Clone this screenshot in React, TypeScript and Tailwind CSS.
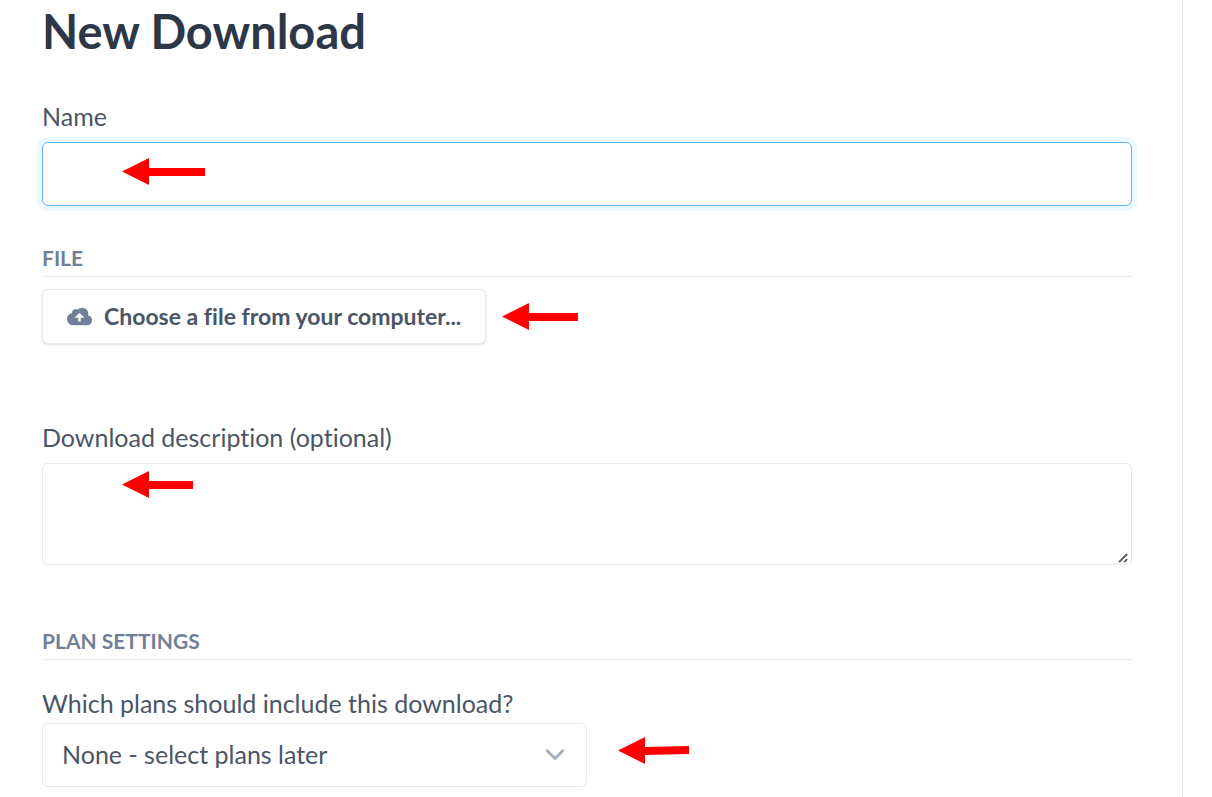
import React from "react";

function Arrow({ length, tail = 14, className = "" }: { length: number; tail?: number; className?: string }) {
  return (
    <svg
      aria-hidden="true"
      width={length}
      height={27}
      viewBox={`0 0 ${length} 27`}
      className={`pointer-events-none shrink-0 ${className}`}
      fill="#ff0000"
    >
      <polygon points={`0,13.5 27,0 27,10 ${length},${tail - 4} ${length},${tail + 4} 27,18 27,27`} />
    </svg>
  );
}

function CloudUpload() {
  return (
    <svg aria-hidden="true" width="25" height="25" viewBox="0 0 20 20" fill="#718096" className="shrink-0">
      <path d="M16.88 9.1A4 4 0 0 1 16 17H5a5 5 0 0 1-1-9.9V7a3 3 0 0 1 4.52-2.59A4.98 4.98 0 0 1 17 8c0 .38-.04.74-.12 1.1zM11 11h3l-4-4-4 4h3v3h2v-3z" />
    </svg>
  );
}

function SectionTitle({ children }: { children: React.ReactNode }) {
  return (
    <h2 className="border-b border-[#e2e8f0] pb-[3px] text-[21px] leading-[30px] font-bold uppercase text-[#718096]">
      {children}
    </h2>
  );
}

const label = "block text-[25px] leading-[36px] text-[#4a5568]";

export default function App() {
  return (
    <div className="min-h-screen bg-white pr-[29px] font-[Lato,'Noto_Sans',sans-serif] [font-variant-ligatures:no-common-ligatures]">
      <main className="min-h-screen border-r border-[#e2e8f0] pt-[3px] pr-[50px] pb-[10px] pl-[42px]">
        <h1 className="text-[47px] leading-[56px] font-bold text-[#2d3748]">New Download</h1>
        <form className="mt-[39px]">
          <label htmlFor="name" className={label}>Name</label>
          <div className="relative mt-2">
            <input
              id="name"
              type="text"
              className="block h-16 w-full rounded-md border border-[#63b3ed] bg-white px-5 text-[25px] text-[#4a5568] ring-[5px] ring-[#ebf8ff] outline-none"
            />
            <Arrow length={83} className="absolute top-4 left-20" />
          </div>

          <section className="mt-[37px]">
            <SectionTitle>File</SectionTitle>
            <div className="mt-3 flex items-center gap-4">
              <button
                type="button"
                className="flex h-[55px] items-center gap-3 rounded-md border border-[#e2e8f0] bg-white px-6 text-[23px] font-bold text-[#4a5568] shadow-sm"
              >
                <CloudUpload />
                Choose a file from your computer...
              </button>
              <Arrow length={76} />
            </div>
          </section>

          <div className="mt-[75px]">
            <label htmlFor="description" className={label}>Download description (optional)</label>
            <div className="relative mt-2">
              <textarea
                id="description"
                className="block h-[102px] w-full resize-y rounded-md border border-[#e2e8f0] bg-white px-5 py-3 text-[25px] text-[#4a5568] outline-none"
              />
              <Arrow length={71} className="absolute top-2 left-20" />
              <svg
                aria-hidden="true"
                width="13"
                height="13"
                viewBox="0 0 13 13"
                className="pointer-events-none absolute right-[2px] bottom-[1px] bg-white"
                fill="none"
                stroke="#555555"
                strokeWidth="1.8"
              >
                <path d="M2 11.2 10.2 3M7.2 11.2l3-3" />
              </svg>
            </div>
          </div>

          <section className="mt-[61px]">
            <SectionTitle>Plan settings</SectionTitle>
            <label htmlFor="plans" className={`${label} mt-[25px]`}>Which plans should include this download?</label>
            <div className="mt-[2px] flex items-start gap-[31px]">
              <div className="relative w-1/2">
                <select
                  id="plans"
                  className="block h-16 w-full appearance-none rounded-md border border-[#e2e8f0] bg-white px-[19px] text-[25px] text-[#4a5568] outline-none"
                >
                  <option>None - select plans later</option>
                </select>
                <svg
                  aria-hidden="true"
                  width="20"
                  height="14"
                  viewBox="0 0 20 14"
                  fill="none"
                  stroke="#a0aec0"
                  strokeWidth="2.8"
                  strokeLinecap="round"
                  strokeLinejoin="round"
                  className="pointer-events-none absolute top-[25px] right-[22px]"
                >
                  <path d="M2.2 2.7 10 10.5l7.8-7.8" />
                </svg>
              </div>
              <Arrow length={71} tail={13} className="mt-[14px]" />
            </div>
          </section>
        </form>
      </main>
    </div>
  );
}
